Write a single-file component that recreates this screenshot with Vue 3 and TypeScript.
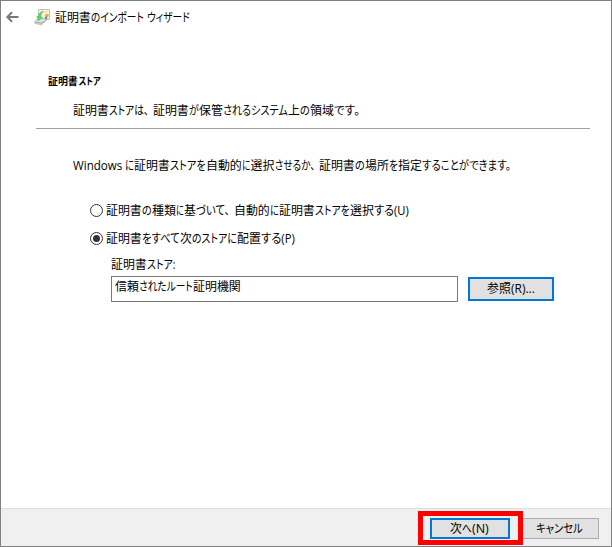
<script setup lang="ts">
import { defineComponent, h, ref } from 'vue'

// Each run is [text, start, width] so that kana stay narrow beside full-width kanji.
type Run = [string, number, number]

const TextLine = defineComponent({
  props: { runs: { type: Array as () => Run[], required: true }, width: { type: Number, required: true } },
  setup(props) {
    return () =>
      h('svg', { class: 'text-line', width: props.width, height: 18 }, [
        h(
          'text',
          { y: 13 },
          props.runs.map(([text, x, w]) =>
            h('tspan', { x, textLength: w - 0.2, lengthAdjust: 'spacingAndGlyphs' }, text),
          ),
        ),
      ])
  },
})

const title: Run[] = [['証明書', 0, 36], ['のインポート', 36, 53], ['ウィザード', 92, 43]]
const heading: Run[] = [['証明書', 0, 30], ['ストア', 30.5, 22.5]]
const subtitle: Run[] = [
  ['証明書', 0, 36], ['ストアは、', 36, 40], ['証明書', 80, 36], ['が', 116, 10], ['保管', 126, 24],
  ['されるシステム', 150, 65], ['上', 215, 12], ['の', 227, 10], ['領域', 237, 24], ['です。', 261, 26],
]
const intro: Run[] = [
  ['Windows', 0, 49.5], ['に', 52, 9], ['証明書', 61, 36], ['ストアを', 97, 36], ['自動的', 133, 36],
  ['に', 169, 8.5], ['選択', 177.5, 24], ['させるか、', 201.5, 41], ['証明書', 246, 36], ['の', 282, 10],
  ['場所', 292, 24], ['を', 316, 9], ['指定', 325, 24], ['することができます。', 349, 89],
]
const automatic: Run[] = [
  ['証明書', 0, 36], ['の', 36, 10], ['種類', 46, 24], ['に', 70, 8], ['基', 78, 12], ['づいて、', 90, 34],
  ['自動的', 128, 36], ['に', 164, 9], ['証明書', 173, 36], ['ストアを', 209, 35], ['選択', 244, 24], ['する(U)', 268, 35],
]
const manual: Run[] = [
  ['証明書', 0, 36], ['をすべて', 36, 38], ['次', 74, 12], ['のストアに', 86, 45], ['配置', 131, 24], ['する(P)', 155, 34],
]
const storeLabel: Run[] = [['証明書', 0, 36], ['ストア:', 36, 28.5]]
const storeName: Run[] = [['信頼', 0, 24], ['されたルート', 24, 54], ['証明機関', 78, 48]]
const browse: Run[] = [['参照', 0, 24], ['(R)...', 24, 24]]
const next: Run[] = [['次', 0, 12], ['へ', 12, 10], ['(N)', 22, 17]]
const cancel: Run[] = [['キャンセル', 0, 47]]

const choice = ref<'auto' | 'manual'>('manual')
</script>

<template>
  <div class="dialog">
    <header class="titlebar">
      <svg class="back" width="13" height="12" viewBox="0 0 13 12">
        <path d="M1.5 6H12.5M6 1.2L1.3 6L6 10.8" />
      </svg>
      <svg class="cert" width="17" height="18" viewBox="0 0 17 18">
        <path d="M4.5 1.5H15.5V11.5H4.5Z" fill="#f6f2e3" stroke="#c9c2a6" />
        <path d="M7.5 4H13.5" stroke="#dedac8" />
        <path d="M11 8.5V12L12 11.3L13 12V8.5Z" fill="#3b83d0" />
        <circle cx="13" cy="7.6" r="1.8" fill="#f0aa28" />
        <path d="M.8 13.5L4 10.5H11.5L12 12.5L7.5 16.8L1 15.5Z" fill="#dfe1e3" stroke="#a5a9ac" stroke-width=".7" />
        <path d="M1.5 14.2L7.3 15.2L11.5 12.5" fill="none" stroke="#8f9396" stroke-width=".8" />
        <path d="M9.3 3.2C6 4 4.4 6 4.6 8.6L2.8 8.5L4.5 12.8L8.6 9.2L6.8 9C6.8 6.6 7.4 4.8 9.3 3.2Z" fill="#5fdc5a" stroke="#37b53c" stroke-width=".5" />
      </svg>
      <TextLine :runs="title" :width="137" />
    </header>

    <main>
      <h1 class="heading"><TextLine :runs="heading" :width="60" /></h1>
      <p class="subtitle"><TextLine :runs="subtitle" :width="292" /></p>
      <hr class="rule" />
      <p class="intro"><TextLine :runs="intro" :width="444" /></p>
      <div class="choices">
        <div class="choice" role="radio" :aria-checked="choice === 'auto'" @click="choice = 'auto'">
          <span class="radio"><i v-if="choice === 'auto'" /></span>
          <TextLine :runs="automatic" :width="306" />
        </div>
        <div class="choice" role="radio" :aria-checked="choice === 'manual'" @click="choice = 'manual'">
          <span class="radio"><i v-if="choice === 'manual'" /></span>
          <TextLine :runs="manual" :width="194" />
        </div>
      </div>
      <div class="store">
        <TextLine :runs="storeLabel" :width="70" />
        <div class="store-row">
          <div class="field"><TextLine :runs="storeName" :width="130" /></div>
          <button class="button primary browse"><TextLine :runs="browse" :width="48" /></button>
        </div>
      </div>
    </main>

    <footer class="footer">
      <div class="marker"><button class="button primary next"><TextLine :runs="next" :width="40" /></button></div>
      <button class="button cancel"><TextLine :runs="cancel" :width="47" /></button>
    </footer>
  </div>
</template>

<style>
body { margin: 0; }
.text-line {
  display: block;
  flex: none;
  overflow: visible;
  fill: #000;
  font-family: "Open Sans", "Noto Sans CJK JP", sans-serif;
  font-size: 12px;
  font-feature-settings: "palt";
}
</style>

<style scoped>
.dialog {
  box-sizing: border-box;
  width: 612px;
  height: 547px;
  display: flex;
  flex-direction: column;
  border: 1px solid #808080;
  background: #fff;
}
.titlebar { display: flex; align-items: center; height: 32px; padding-left: 5px; }
.titlebar .text-line { margin-top: 2px; }
.back { fill: none; stroke: #777; stroke-width: 2; }
.cert { margin: 0 4px 0 15px; }
main { flex: 1; }
.heading { margin: 39px 0 0 47px; }
.heading .text-line { font-size: 10px; font-weight: 700; }
.subtitle { margin: 12px 0 0 72px; }
.rule { height: 1px; margin: 8px 21px 0 35px; border: 0; background: #a0a0a0; }
.intro { margin: 28px 0 0 72px; }
.choices { display: flex; flex-direction: column; gap: 10px; padding: 27px 0 0 89px; }
.choice { display: flex; align-items: flex-start; gap: 3px; }
.radio {
  box-sizing: border-box;
  display: flex;
  align-items: center;
  justify-content: center;
  width: 13px;
  height: 13px;
  margin-top: 2px;
  border: 1px solid #333;
  border-radius: 50%;
}
.radio i { width: 7px; height: 7px; border-radius: 50%; background: #333; }
.store { padding: 8px 0 0 110px; }
.store-row { display: flex; align-items: center; gap: 10px; margin-top: 2px; }
.field { box-sizing: border-box; width: 347px; height: 26px; padding: 1px 3px; border: 1px solid #7a7a7a; }
.button {
  box-sizing: border-box;
  display: flex;
  align-items: center;
  justify-content: center;
  margin: 0;
  padding: 0;
  border: 1px solid #adadad;
  background: #e1e1e1;
}
.primary { border: 2px solid #0078d7; }
.browse { width: 86px; height: 24px; }
.footer {
  box-sizing: border-box;
  display: flex;
  align-items: flex-start;
  justify-content: flex-end;
  height: 38px;
  padding: 2px 12px 0 0;
  border-top: 1px solid #dfdfdf;
  background: #f0f0f0;
}
.marker { box-sizing: border-box; z-index: 1; width: 105px; height: 34px; padding: 2px 0 0 7px; border: 5px solid #f00; }
.next { width: 80px; height: 21px; }
.cancel { width: 80px; height: 21px; margin: 7px 0 0 -4px; }
</style>
